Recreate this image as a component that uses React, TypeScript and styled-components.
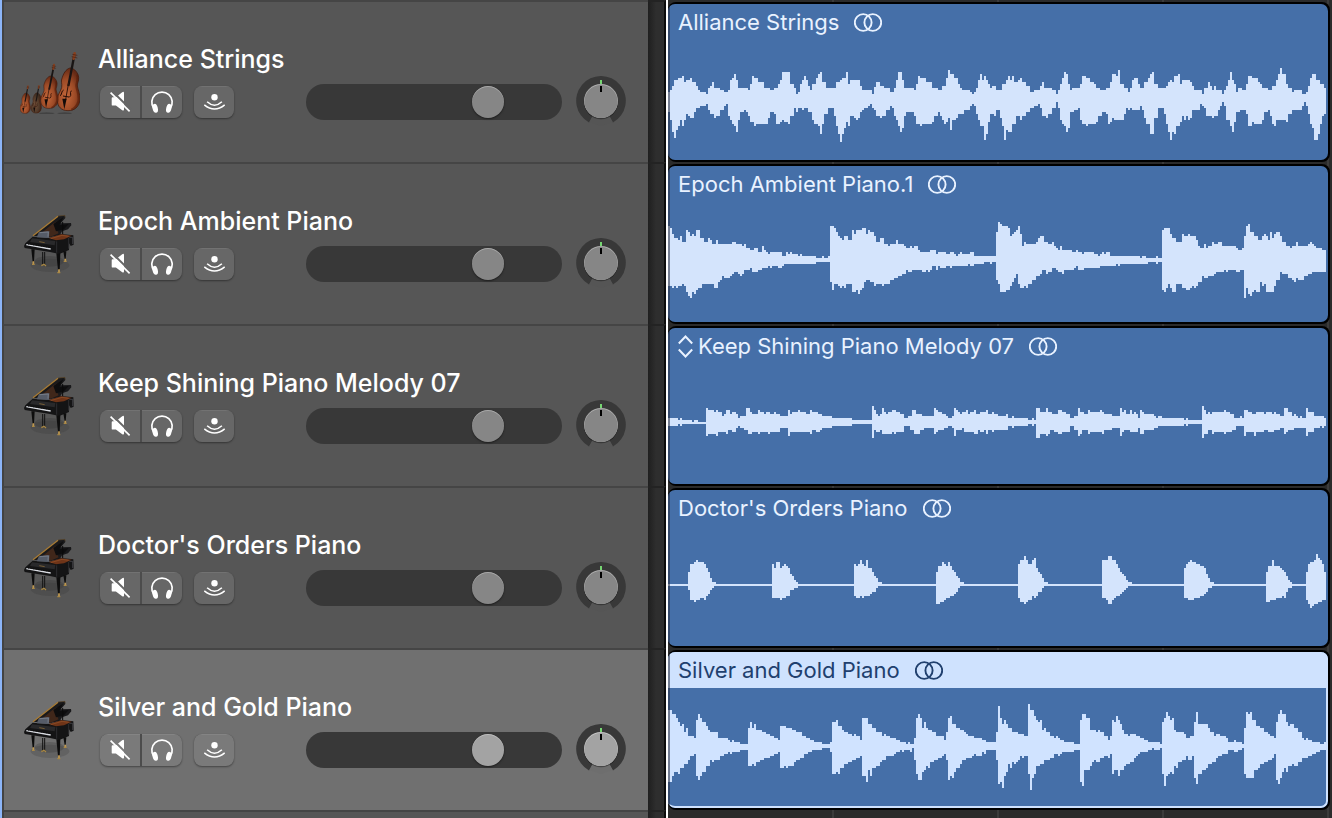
import React from "react";
import styled, { createGlobalStyle, css } from "styled-components";

const Global = createGlobalStyle`
  *, *::before, *::after { box-sizing: border-box; }
  html, body { margin: 0; padding: 0; background: #2a2a2a; }
  body { font-family: Inter, "Liberation Sans", sans-serif; overflow-x: hidden; }
  button { font: inherit; }
`;

/* ---------- layout ---------- */

const Workspace = styled.main`
  display: grid;
  grid-template-columns: 1fr 1fr;
  min-height: 100vh;
`;

const HeaderColumn = styled.section`
  display: flex;
  flex-direction: column;
  border-left: 2px solid #8cb5f8;
`;

const HeaderRow = styled.article`
  display: flex;
  min-height: 162px;
`;

const HeaderFiller = styled.div`
  display: flex;
  flex: 1;
`;

const HeaderBody = styled.div<{ $selected?: boolean }>`
  display: flex;
  flex: 1;
  min-width: 0;
  align-items: center;
  gap: 18px;
  padding: 0 22px 0 16px;
  border-top: 2px solid #454545;
  border-left: 2px solid #434343;
  background: ${(p) => (p.$selected ? "#707070" : "#565656")};
`;

const Gutter = styled.div`
  width: 18px;
  border-top: 2px solid #232323;
  border-right: 2px solid #0c0c0c;
  background: linear-gradient(90deg, #1f1f1f, #2e2e2e 8px, #2e2e2e);
`;

const TrackInfo = styled.div`
  flex: 1;
  min-width: 0;
  align-self: flex-start;
  padding-top: 40px;
`;

const TrackName = styled.h2`
  margin: 0;
  font-size: 25px;
  line-height: 34px;
  font-weight: 500;
  color: #fff;
  white-space: nowrap;
`;

const Controls = styled.div`
  display: flex;
  align-items: center;
  height: 52px;
  padding-left: 2px;
`;

/* ---------- track controls ---------- */

const ButtonGroup = styled.div`
  display: flex;
  gap: 2px;
  margin-right: 12px;
  border-radius: 8px;
  overflow: hidden;
  background: #4c4c4c;
  box-shadow: 0 1px 2px rgba(0, 0, 0, 0.4);
`;

const IconButton = styled.button<{ $lit?: boolean }>`
  display: flex;
  align-items: center;
  justify-content: center;
  width: 40px;
  height: 32px;
  padding: 0;
  border: 0;
  color: #fff;
  background: ${(p) => (p.$lit ? "#7a7a7a" : "#676767")};
  box-shadow: inset 0 1px 0 rgba(255, 255, 255, 0.08);
`;

const knob = css`
  width: 32px;
  height: 32px;
  border: 0;
  border-radius: 50%;
  box-shadow: inset 0 1px 0 rgba(255, 255, 255, 0.3), 0 1px 2px rgba(0, 0, 0, 0.5);
`;

const Fader = styled.input<{ $lit?: boolean }>`
  appearance: none;
  flex: 1;
  min-width: 80px;
  height: 36px;
  margin: 0 14px 0 60px;
  padding: 0 2px;
  border-radius: 18px;
  background: #383838;
  &::-webkit-slider-thumb {
    appearance: none;
    ${knob}
    background: ${(p) => (p.$lit ? "#a3a3a3" : "#868686")};
  }
  &::-moz-range-thumb {
    ${knob}
    background: ${(p) => (p.$lit ? "#a3a3a3" : "#868686")};
  }
`;

const PanBox = styled.label`
  position: relative;
  display: block;
  width: 50px;
  height: 52px;
`;

const PanInput = styled.input`
  position: absolute;
  inset: 0;
  width: 100%;
  height: 100%;
  margin: 0;
  opacity: 0;
`;

/* ---------- timeline ---------- */

const Timeline = styled.section`
  display: flex;
  flex-direction: column;
  gap: 2px;
  padding: 2px 2px 0 0;
  border-left: 2px solid #fff;
  background:
    repeating-linear-gradient(90deg, transparent 0 163px, #3b3b3b 163px 165px) 1px 0,
    linear-gradient(#2b2b2b, #2b2b2b);
`;

const ClipFrame = styled.article`
  height: 160px;
  padding: 2px 2px 2px 0;
  border-radius: 8px;
  background: #000;
`;

const ClipBody = styled.div<{ $selected?: boolean }>`
  position: relative;
  height: 156px;
  overflow: hidden;
  border-radius: 7px;
  background: #456fa8;
  color: #e9f2ff;
  &::before {
    content: "";
    position: absolute;
    z-index: 1;
    inset: 0 auto 0 0;
    width: 2px;
    background: rgba(40, 44, 60, 0.55);
  }
  ${(p) =>
    p.$selected &&
    css`
      color: #21406e;
      &::after {
        content: "";
        position: absolute;
        inset: 0;
        border: solid #cfe2fe;
        border-width: 0 2px 2px 0;
        border-radius: 7px;
      }
    `}
`;

const ClipTitle = styled.header<{ $selected?: boolean }>`
  position: relative;
  display: flex;
  align-items: center;
  height: 36px;
  padding: 0 10px;
  font-size: 22px;
  line-height: 28px;
  white-space: nowrap;
  background: ${(p) => (p.$selected ? "#cfe2fe" : "transparent")};
`;

const ClipName = styled.span`
  margin-right: 15px;
`;

const Waveform = styled.svg`
  position: absolute;
  inset: 0;
  width: 100%;
  height: 100%;
`;

/* ---------- icons ---------- */

const MuteIcon = ({ bg }: { bg: string }) => (
  <svg width="24" height="22" viewBox="-2 0 24 22" aria-hidden="true">
    <path d="M1.700 7.200q0-.9.9-.9h3.300L12.200 1.200q1.800-1.100 1.800.7v16.600q0 1.800-1.800.7L5.900 14.600H2.600q-.9 0-.9-.9z" fill="currentColor" />
    <path d="M2.600.6 21 18.800" stroke={bg} strokeWidth="2" />
    <path d="M.6 1.600 19.600 20.400" stroke="currentColor" strokeWidth="1.700" />
  </svg>
);

const HeadphonesIcon = () => (
  <svg width="24" height="24" viewBox="-1 -1 24 24" aria-hidden="true">
    <path d="M2.700 17.200A10.200 10.200 0 1 1 19.300 17.200" fill="none" stroke="currentColor" strokeWidth="1.700" />
    <ellipse cx="4.200" cy="17.300" rx="2.600" ry="4.500" transform="rotate(-14 4.200 17.300)" fill="currentColor" />
    <ellipse cx="17.800" cy="17.300" rx="2.600" ry="4.500" transform="rotate(14 17.800 17.300)" fill="currentColor" />
  </svg>
);

const MonitorIcon = () => (
  <svg width="24" height="18" viewBox="-1.500 0 24 18" aria-hidden="true">
    <circle cx="11" cy="4.300" r="3.200" fill="currentColor" />
    <path d="M3.600 8.800Q11 15.600 18.400 8.800M.8 11.800Q11 20.200 21.200 11.800" fill="none" stroke="currentColor" strokeWidth="1.500" />
  </svg>
);

const LoopIcon = () => (
  <svg width="28" height="20" viewBox="1 -.5 28 20" fill="none" stroke="currentColor" strokeWidth="1.900" aria-hidden="true">
    <circle cx="10.200" cy="10" r="8.400" />
    <circle cx="19.800" cy="10" r="8.400" />
  </svg>
);

const ChevronsIcon = () => (
  <svg width="20" height="24" viewBox="0 0 20 24" fill="none" stroke="currentColor" strokeWidth="2" aria-hidden="true">
    <path d="M.8 9.500 7.500 2.500 14.200 9.500M.8 15.500 7.500 22.500 14.200 15.500" />
  </svg>
);

const PanDial = ({ lit }: { lit?: boolean }) => (
  <svg width="50" height="52" viewBox="0 0 50 52" aria-hidden="true">
    <path d="M13 46.500A24.800 24.800 0 1 1 37 46.500L32.500 38.500H17.500Z" fill="#383838" />
    <path d="M17.500 38.500 25 34 32.500 38.500 36.500 46 25 50 13.500 46Z" fill={lit ? "#6e6e6e" : "#555"} />
    <circle cx="25" cy="26" r="17.200" fill="rgba(0,0,0,.35)" />
    <circle cx="25" cy="25" r="17" fill={lit ? "#c4c4c4" : "#adadad"} />
    <circle cx="25" cy="25.500" r="16.600" fill={lit ? "#a3a3a3" : "#868686"} />
    <path d="M25 4V8" stroke="#76d672" strokeWidth="2" />
    <path d="M25 10V16" stroke="#000" strokeWidth="2" />
  </svg>
);

const Instrument = ({ transform, dark }: { transform: string; dark?: boolean }) => (
  <g transform={transform}>
    <path
      d="M40 0C52 2 62 14 64 28C65 40 59 46 60 54C62 66 68 76 68 94C66 118 50 128 32 128C12 128 0 116 0 96C0 78 11 70 13 58C15 46 9 40 15 28C20 12 30 0 40 0Z"
      fill={dark ? "url(#woodDark)" : "url(#wood)"}
      stroke="#3a1407"
      strokeWidth="2"
    />
    <path d="M60 20C63 40 55 46 57 56C60 72 66 80 63 100C58 116 50 122 42 125" fill="none" stroke="#571d09" strokeWidth="6" opacity=".6" />
    <path d="M33 54 51-38" stroke="#191514" strokeWidth="7" />
    <path d="M49-28 52-44" stroke="#86401f" strokeWidth="8" strokeLinecap="round" />
    <path d="M43-34 60-30M45-41 60-38" stroke="#4a1d0d" strokeWidth="2" />
    <path d="M34 44 24 100" stroke="#32140a" strokeWidth="3" />
    <path d="M15 92H28L21 124Z" fill="#120b09" />
    <path d="M19 66q-5 2-6 9t-5 8M42 68q-4 6-2 10t-4 10M17 84l18 3" stroke="#230b05" strokeWidth="3" fill="none" />
  </g>
);

const StringsPicture = () => (
  <svg width="60" height="64" viewBox="60 60 180 192" role="img" aria-label="String section">
    <defs>
      <radialGradient id="wood" cx=".4" cy=".65" r=".65">
        <stop offset="0" stopColor="#c4673a" />
        <stop offset=".6" stopColor="#9c4a26" />
        <stop offset="1" stopColor="#642a15" />
      </radialGradient>
      <radialGradient id="woodDark" cx=".4" cy=".6" r=".65">
        <stop offset="0" stopColor="#76533b" />
        <stop offset="1" stopColor="#35261c" />
      </radialGradient>
    </defs>
    <ellipse cx="140" cy="250" rx="24" ry="3" fill="#3b3b3b" opacity=".7" />
    <ellipse cx="194" cy="250" rx="22" ry="3" fill="#3b3b3b" opacity=".7" />
    <Instrument transform="translate(172 114)" />
    <Instrument transform="translate(122 138) scale(.77 .76)" />
    <Instrument dark transform="translate(93 188) scale(.46 .48)" />
    <Instrument transform="translate(60 189) scale(.46 .48)" />
  </svg>
);

const PianoPicture = () => (
  <svg width="60" height="64" viewBox="60 66 180 192" role="img" aria-label="Grand piano">
    <ellipse cx="150" cy="226" rx="58" ry="20" fill="#333" opacity=".22" />
    <ellipse cx="148" cy="214" rx="44" ry="16" fill="#2b2b2b" opacity=".25" />
    <path d="M99 137 174 78 195 76 196 84 182 100 213 99 214 106 204 118 186 124 180 134 150 142Z" fill="#19191b" />
    <path d="M118 134 160 100 176 92 166 112 176 130 152 140Z" fill="#40271a" />
    <path d="M160 102 190 82 178 106 206 102 192 118 168 124Z" fill="#0d0d0e" />
    <path d="M99 137 174 79" stroke="#a97c35" strokeWidth="4" />
    <path d="M174 78 195 76 195 82" stroke="#5f4a2c" strokeWidth="2" fill="none" />
    <path d="M188 96V134" stroke="#0a0a0a" strokeWidth="3" />
    <path d="M72 168 76 160 98 140 150 144 182 132 220 136 221 164 212 168 208 160 207 180 178 192 150 186 74 174Z" fill="#141415" />
    <path d="M146 144 184 133 215 137 192 148 168 151Z" fill="#6e3418" />
    <path d="M152 146 186 136 206 139" stroke="#96532a" strokeWidth="2" fill="none" />
    <path d="M117 126 148 123 147 144 110 142Z" fill="#565c68" />
    <path d="M120 128 145 126 144 140" stroke="#858c98" strokeWidth="2" fill="none" />
    <path d="M96 145 166 153 164 166 90 156Z" fill="#29292b" />
    <path d="M118 155 134 158" stroke="#9d793c" strokeWidth="2" />
    <path d="M79 164 152 177" stroke="#d9dce2" strokeWidth="4" />
    <path d="M84 162 154 173" stroke="#0b0b0b" strokeWidth="3" strokeDasharray="3 2" />
    <path d="M170 154V188M206 144V176" stroke="#3a3a3e" strokeWidth="2" />
    <path d="M208 142H218V162" stroke="#515158" strokeWidth="2" fill="none" />
    <path d="M94 178H104L102 216H98ZM169 190H181L179 240H174ZM190 184H199L197 208H194Z" fill="#0d0d0d" />
    <path d="M128 186V226M134 186V226" stroke="#121212" strokeWidth="3" />
    <path d="M100 214V225M177 238V249M196 206V214" stroke="#c29a50" strokeWidth="5" />
    <path d="M96 223H104M172 248H181M124 227 132 223 138 228M191 214H200" stroke="#a98845" strokeWidth="4" fill="none" />
  </svg>
);

/* ---------- audio envelopes ----------
   Each envelope is a list of "x:y" steps on a grid of 6-unit cells, in two
   segments that start at 0 and at 990. */

type Wave = { top: [string, string]; bottom: [string, string]; origin: number };
type Step = [number, number];

const GRID_LEFT = 24;
const GRID_RIGHT = 1998;

const parse = (segments: [string, string]): Step[] =>
  segments
    .flatMap((text, i) =>
      text
        .trim()
        .split(/\s+/)
        .filter(Boolean)
        .map((pair): Step => {
          const [x, y] = pair.split(":").map(Number);
          return [x + i * 990, y];
        }),
    )
    .sort((a, b) => a[0] - b[0]);

const outline = (top: Step[], bottom: Step[]) => {
  const forward = top.map(([x, y]) => `H${x}V${y}`).join("");
  const back = [...bottom]
    .reverse()
    .map(([x, y]) => `V${y}H${x}`)
    .join("");
  return `M${GRID_LEFT} ${top[0][1]}${forward}H${GRID_RIGHT}${back}H${GRID_LEFT}Z`;
};

const strings: Wave = {
  origin: 12,
  top: [
    `24:276 30:270 36:258 42:240 54:234 66:228 72:246 78:240 90:234 96:246 108:258 114:270 120:276 138:282 144:264 150:258 156:246 162:264 180:270 192:276 204:270 210:240 216:234 222:222 228:240 234:264 264:270 270:252 276:228 282:234 294:246 312:264 330:270 342:264 354:252 360:240 366:216 390:252 402:264 408:282 414:276 420:252 426:240 432:228 438:240 444:258 450:270 456:252 468:234 474:222 480:216 486:246 498:264 528:246 540:240 546:234 558:216 564:252 570:240 600:258 606:270 636:282 642:260 648:246 660:258 672:264 690:276 702:264 708:240 714:216 726:240 732:264 762:270 768:252 774:228 780:234 798:246 816:264 834:270 846:258 858:234 864:210 870:222 882:234 894:252 900:264 906:270 930:276 936:282 942:276 948:264 954:240 960:222 966:240 972:228 978:240 984:252`,
    `0:264 6:258 18:270 36:252 48:240 54:228 60:240 66:228 72:246 84:240 90:234 96:246 108:258 120:276 132:270 144:270 150:258 156:246 162:264 186:270 198:282 204:270 210:252 216:234 222:216 228:222 234:252 240:270 246:264 270:252 276:228 288:234 300:246 312:252 318:264 330:270 348:264 360:246 366:222 378:228 384:210 390:252 402:264 414:276 420:264 426:240 432:234 444:252 450:264 462:246 474:234 480:222 486:216 492:252 504:264 528:258 534:246 540:240 546:246 552:228 564:222 570:252 576:240 600:246 606:258 612:270 636:282 642:264 654:246 660:258 666:270 672:258 678:270 696:282 702:270 708:258 714:240 720:216 726:240 732:252 738:276 744:264 756:270 768:252 774:228 786:234 804:246 810:252 816:264 834:270 846:258 858:240 864:222 870:204 876:222 888:252 894:264 906:276 912:270 936:282 948:276 954:258 960:234 966:222 978:240 990:252 1002:264`,
  ],
  bottom: [
    `24:336 30:360 36:396 42:414 48:390 54:378 60:360 66:378 72:360 78:342 84:348 90:354 102:336 108:324 120:318 138:312 144:330 150:342 162:354 168:348 180:330 192:318 198:312 204:348 210:360 216:372 222:378 228:396 234:360 240:336 252:330 258:336 264:348 270:366 282:378 288:372 324:354 330:336 342:342 348:372 360:366 366:360 372:366 384:372 390:348 402:324 408:336 414:324 426:330 432:324 444:336 456:360 462:372 474:378 480:402 486:372 492:342 504:324 522:348 528:378 534:402 540:426 546:402 552:384 558:366 564:378 570:348 582:354 588:360 594:354 600:336 606:330 612:324 624:318 630:312 636:324 642:330 648:348 660:354 666:348 678:330 690:318 696:324 702:348 708:360 714:378 720:396 726:384 732:348 738:336 762:348 768:372 780:378 786:372 816:366 822:348 834:336 840:348 846:360 852:372 858:366 864:354 870:390 876:360 888:354 894:342 912:330 930:318 936:312 942:318 948:342 954:360 960:378 972:420 978:402 984:366 990:354`,
    `0:342 12:348 18:330 30:354 36:378 42:420 48:390 54:396 66:372 78:348 90:360 96:348 108:336 120:324 132:318 144:312 150:324 156:348 168:354 174:342 186:324 198:306 204:324 210:360 216:372 222:378 228:396 234:384 240:336 252:330 264:324 270:360 276:372 288:378 294:372 318:366 324:348 336:336 348:342 354:372 360:366 366:354 372:360 402:342 408:324 414:330 420:324 426:330 450:318 456:330 462:354 468:372 480:402 492:354 504:324 522:342 528:372 534:396 540:420 546:396 552:402 558:378 570:366 576:348 582:360 588:348 594:360 600:354 606:330 630:312 636:318 642:324 648:348 666:354 672:348 684:330 690:318 696:306 702:318 708:360 720:378 726:396 732:366 738:336 750:330 768:342 774:378 786:366 792:372 816:360 822:336 834:330 840:348 846:372 852:378 858:360 888:366 894:342 906:330 936:318 942:306 948:318 954:342 960:372 966:384 972:420 984:402 990:372 996:348 1002:342`,
  ],
};

const epoch: Wave = {
  origin: 3,
  top: [
    `24:183 30:189 36:207 42:219 54:225 60:213 66:231 78:195 84:201 90:213 96:207 102:213 108:195 120:219 132:231 144:219 150:225 156:237 168:225 174:237 216:231 228:237 246:243 252:237 258:249 270:255 282:249 294:261 306:243 312:255 318:261 324:267 330:261 366:273 378:261 384:267 390:261 396:267 414:273 420:267 426:273 432:273 468:279 486:273 492:279 504:273 510:183 522:189 528:201 534:213 540:219 546:225 552:213 564:225 576:195 582:207 588:195 606:189 618:207 624:195 630:201 642:213 648:231 660:219 672:237 684:243 690:237 708:225 714:237 732:243 738:249 750:243 756:249 762:243 774:255 780:261 810:255 828:267 834:261 858:267 870:261 882:267 888:273 894:267 900:261 906:267 930:261 942:273`,
    `0:273 18:201 24:171 30:177 36:183 54:189 60:213 66:207 72:201 78:195 84:183 90:207 96:243 102:231 108:237 138:231 144:219 150:213 162:231 174:237 186:231 192:243 198:249 204:255 210:243 216:255 246:261 258:255 264:261 276:267 282:261 312:267 324:273 330:267 336:261 342:267 348:261 360:273 450:279 456:273 468:279 498:273 504:279 516:195 522:189 540:207 546:219 558:231 576:207 582:213 594:207 600:213 618:225 624:243 630:249 642:237 648:249 654:243 666:231 672:237 684:231 696:243 738:249 744:255 756:249 762:213 768:183 774:177 780:201 792:213 804:225 816:213 822:207 828:213 834:225 840:201 846:219 852:207 858:201 870:213 876:231 888:243 900:249 906:243 918:231 924:243 954:237 960:231 966:237 972:243 978:249 996:255`,
  ],
  bottom: [
    `24:363 36:369 42:363 48:369 54:363 66:357 72:363 78:381 84:393 90:399 96:381 102:387 108:375 114:369 126:357 162:369 174:351 180:345 186:333 192:339 210:333 216:327 222:321 234:327 240:333 246:327 252:315 270:309 276:321 294:315 306:309 324:303 330:309 336:303 354:309 366:303 372:297 468:291 510:351 516:375 522:357 534:363 540:369 546:363 552:369 558:357 576:381 588:375 594:387 600:375 606:369 612:351 618:345 630:351 642:363 648:357 666:363 672:357 690:345 702:339 714:333 726:327 738:315 744:321 756:315 786:321 798:315 804:321 810:315 816:303 828:315 834:303 840:309 858:303 870:309 876:303 924:297 930:303 942:297 972:291`,
    `0:297 6:291 18:345 24:357 30:381 48:375 60:363 66:351 72:339 78:327 84:357 90:369 102:363 108:369 114:357 126:345 138:333 150:327 156:315 168:327 174:321 186:309 198:315 204:321 216:327 222:315 252:309 258:303 264:315 282:309 318:309 330:303 378:297 384:303 390:297 474:291 498:297 504:291 516:375 522:381 528:369 534:357 540:369 546:381 558:357 576:369 588:375 600:369 606:363 612:369 618:363 624:351 636:333 642:339 654:333 672:327 678:321 702:315 708:321 714:315 738:321 750:315 762:399 768:369 774:387 780:393 786:381 792:375 798:381 810:351 816:363 822:357 828:381 852:363 858:345 870:321 876:327 894:339 906:345 912:351 918:339 924:345 942:333 954:327 966:321`,
  ],
};

const shining: Wave = {
  origin: 9,
  top: [
    `24:279 54:285 60:279 66:285 96:291 102:285 114:291 138:249 144:255 162:261 168:255 174:261 186:273 192:267 198:255 210:267 216:261 228:267 234:279 240:273 258:249 270:261 276:267 294:255 300:261 312:267 318:261 330:267 342:261 348:267 360:273 384:255 390:267 396:261 414:255 420:261 438:267 450:255 456:261 474:267 486:273 516:279 576:285 636:243 642:255 648:267 654:273 660:267 666:249 672:261 678:267 684:261 696:255 708:261 720:267 732:279 744:273 756:255 768:267 786:273 822:249 828:255 834:261 846:267 858:273 864:279 876:273 882:249 888:255 894:261 900:267 906:261 918:255 924:267 930:261 942:255 948:267 960:261 978:255 984:267 996:261`,
    `12:267 24:273 48:267 54:279 66:273 72:279 114:285 126:279 132:285 138:249 150:261 168:249 174:261 186:267 204:255 216:261 228:267 240:279 252:273 264:249 270:261 282:267 294:255 300:261 330:255 336:261 342:267 366:273 390:249 396:261 402:255 408:267 420:255 426:267 432:261 438:267 444:279 450:255 456:261 462:267 492:273 498:279 504:273 516:279 582:285 588:279 594:285 636:243 642:255 648:267 654:261 660:267 666:261 702:255 708:261 720:267 732:279 750:273 756:279 762:255 774:261 786:267 798:261 822:267 828:261 846:267 852:261 858:267 870:273 882:249 894:261 906:273 912:267 918:273 924:279 930:273 936:279 948:249 954:261 972:273 996:273 1002:279`,
  ],
  bottom: [
    `24:303 54:297 60:303 66:297 138:333 144:327 168:333 174:321 198:327 204:315 216:321 228:309 234:303 240:309 252:315 264:327 276:321 294:327 300:321 324:327 330:321 360:309 384:333 390:321 450:327 456:315 468:321 480:315 486:309 516:303 576:297 636:339 642:315 648:321 660:315 666:327 696:321 702:327 708:321 732:303 750:315 762:327 780:315 792:309 822:327 828:321 834:315 852:309 864:303 876:309 882:333 888:315 906:309 912:321 942:327 954:315 960:321 972:315 978:327 984:315`,
    `0:315 6:321 12:315 48:315 54:303 66:309 72:303 114:297 126:303 132:297 138:339 150:327 168:333 174:327 180:315 192:321 204:327 216:321 240:303 252:315 264:333 270:327 276:315 294:327 300:321 336:327 342:315 366:309 390:333 396:321 402:315 420:321 444:309 450:327 462:315 492:309 504:303 582:297 588:303 594:297 636:339 642:327 654:315 666:327 672:321 702:327 708:321 726:315 738:303 762:333 768:321 792:333 798:321 822:315 834:321 852:315 870:309 882:327 888:321 894:315 912:309 948:333 954:321 972:309 990:303 996:309 1002:303`,
  ],
};

/* Short chords on a thin baseline: one entry per chord, one number per cell. */
const chords: { at: number; top: number[]; bottom: number[] }[] = [
  { at: 84, top: [261, 237, 237, 231, 225, 231, 231, 231, 237, 249, 261, 279, 291, 291, 297], bottom: [315, 345, 345, 351, 345, 345, 339, 339, 345, 333, 327, 315, 309, 303, 303] },
  { at: 336, top: [237, 249, 231, 231, 249, 243, 237, 243, 249, 267, 273, 285, 291, 297], bottom: [339, 339, 339, 339, 345, 339, 339, 333, 333, 315, 315, 309, 309, 303] },
  { at: 582, top: [237, 243, 237, 225, 237, 243, 225, 249, 249, 261, 273, 279, 291, 291], bottom: [333, 339, 339, 333, 339, 333, 333, 333, 327, 321, 321, 309, 303, 303] },
  { at: 828, top: [261, 243, 243, 231, 237, 243, 231, 243, 255, 261, 273, 279, 291, 291], bottom: [357, 357, 351, 351, 345, 339, 339, 333, 333, 327, 321, 309, 303, 303] },
  { at: 1074, top: [237, 225, 225, 213, 225, 237, 237, 225, 219, 249, 261, 267, 279, 291, 291], bottom: [339, 351, 351, 357, 351, 345, 345, 333, 339, 333, 321, 321, 309, 303, 303] },
  { at: 1326, top: [225, 225, 225, 213, 213, 225, 225, 237, 249, 261, 267, 273, 285, 291, 291], bottom: [339, 339, 345, 357, 357, 345, 339, 333, 333, 327, 321, 315, 309, 303, 303] },
  { at: 1572, top: [249, 237, 231, 225, 231, 231, 237, 237, 243, 243, 249, 267, 279, 291, 291], bottom: [339, 339, 345, 345, 345, 339, 339, 339, 333, 333, 327, 321, 309, 309, 303] },
  { at: 1818, top: [261, 243, 243, 225, 243, 243, 243, 249, 255, 261, 273, 285, 291], bottom: [351, 351, 345, 345, 345, 339, 339, 339, 333, 339, 321, 309, 309] },
  { at: 1938, top: [261, 237, 231, 231, 225, 207, 219, 225, 237, 261], bottom: [345, 357, 369, 363, 357, 357, 351, 351, 345, 345] },
];

const chordSteps = (side: "top" | "bottom", rest: number): string =>
  [`24:${rest}`]
    .concat(
      chords.flatMap((c) => [
        ...c[side].map((y, i) => `${c.at + i * 6}:${y}`),
        `${c.at + c[side].length * 6}:${rest}`,
      ]),
    )
    .join(" ");

const doctor: Wave = {
  origin: 15,
  top: [chordSteps("top", 297), ""],
  bottom: [chordSteps("bottom", 303), ""],
};

const silver: Wave = {
  origin: 21,
  top: [
    `24:195 36:207 48:219 54:231 60:243 66:237 72:261 78:249 84:273 102:279 108:225 114:207 120:219 126:231 138:243 144:255 150:261 174:279 204:285 210:291 216:285 222:291 240:297 264:249 270:231 276:249 282:237 288:255 306:261 318:267 330:273 342:279 354:285 360:243 378:249 396:255 408:261 426:273 438:279 450:285 462:291 486:297 510:291 516:231 528:225 534:243 546:255 552:261 564:267 576:273 582:267 588:273 600:285 606:219 624:237 636:249 648:261 666:273 672:267 678:273 690:279 708:285 720:291 738:297 744:291 750:297 762:279 768:219 774:207 780:219 786:249 792:231 798:249 804:255 816:261 828:273 852:285 858:261 864:219 870:213 876:237 888:249 900:255 912:261 918:267 924:273 942:279 966:285 978:291`,
    `0:291 18:261 24:183 30:219 36:237 42:225 48:237 54:249 66:261 84:267 102:273 114:177 120:195 132:213 138:225 144:231 150:225 156:255 162:249 168:261 180:273 192:279 198:273 204:279 210:285 222:291 252:297 270:225 276:207 288:219 300:255 318:261 324:255 330:261 342:273 354:285 360:273 366:225 372:231 378:213 384:225 390:237 396:255 402:267 414:273 420:267 426:267 438:273 450:279 462:285 474:291 510:297 516:231 522:219 528:201 534:213 540:225 546:219 552:255 558:261 582:267 588:279 600:273 612:231 618:201 624:237 654:249 660:261 672:273 678:267 690:273 708:279 714:291 732:285 738:291 756:297 762:249 768:201 774:207 780:201 786:225 798:243 810:249 822:261 834:267 840:273 852:279 858:231 864:207 870:195 876:207 888:231 894:243 900:237 912:249 924:261 936:279 942:285 948:279 954:285 966:291 990:297 1002:291`,
  ],
  bottom: [
    `24:411 36:393 42:381 54:387 60:369 72:357 84:345 90:333 102:327 108:393 114:405 120:393 126:381 138:363 150:345 156:351 162:345 180:333 192:327 204:321 210:327 216:321 240:315 264:363 276:357 282:363 288:351 300:345 312:339 330:333 342:327 354:321 360:369 372:363 378:369 384:363 402:351 408:345 420:339 432:327 444:321 456:315 486:309 510:321 516:387 528:381 534:387 540:369 552:357 564:351 576:345 588:339 600:333 606:393 618:411 624:375 630:393 636:369 648:363 660:351 666:345 678:333 702:327 708:321 720:315 726:321 732:315 750:321 756:309 762:345 768:387 774:405 786:381 792:375 798:363 804:369 810:351 822:345 834:339 846:333 852:327 858:345 864:405 870:393 876:399 882:381 888:369 900:357 906:345 918:339 936:333 942:327 948:333 966:321 972:327 978:315`,
    `0:315 18:345 24:417 30:411 36:429 42:393 48:381 54:357 60:369 66:351 72:357 78:351 84:345 90:333 96:339 102:333 114:387 120:435 126:399 132:387 138:363 150:357 162:345 180:339 192:327 204:333 210:327 216:321 252:315 270:411 276:423 282:375 300:363 306:351 312:345 318:351 330:339 342:333 354:339 360:327 366:387 372:375 384:393 390:375 402:363 408:357 420:351 432:339 438:333 444:327 450:321 474:315 486:309 492:315 510:309 516:387 522:423 528:393 534:387 540:381 546:387 552:363 558:369 564:351 576:345 588:333 594:345 606:333 612:399 618:417 624:387 636:375 648:369 654:357 666:351 678:339 684:333 696:327 708:327 714:315 732:321 744:315 756:309 762:387 768:399 792:375 804:369 810:357 822:351 834:345 846:339 852:327 858:405 864:417 870:399 876:381 882:369 888:381 894:363 906:357 912:363 924:351 936:339 954:333 966:327 978:321 990:315`,
  ],
};

/* ---------- page ---------- */

type Track = {
  name: string;
  clip: string;
  wave: Wave;
  strings?: boolean;
  alternates?: boolean;
  selected?: boolean;
};

const tracks: Track[] = [
  { name: "Alliance Strings", clip: "Alliance Strings", wave: strings, strings: true },
  { name: "Epoch Ambient Piano", clip: "Epoch Ambient Piano.1", wave: epoch },
  { name: "Keep Shining Piano Melody 07", clip: "Keep Shining Piano Melody 07", wave: shining, alternates: true },
  { name: "Doctor's Orders Piano", clip: "Doctor's Orders Piano", wave: doctor },
  { name: "Silver and Gold Piano", clip: "Silver and Gold Piano", wave: silver, selected: true },
];

const TrackHeader = ({ track }: { track: Track }) => (
  <HeaderRow>
    <HeaderBody $selected={track.selected}>
      {track.strings ? <StringsPicture /> : <PianoPicture />}
      <TrackInfo>
        <TrackName>{track.name}</TrackName>
        <Controls>
          <ButtonGroup>
            <IconButton $lit={track.selected} type="button" aria-label={`Mute ${track.name}`}>
              <MuteIcon bg={track.selected ? "#7a7a7a" : "#676767"} />
            </IconButton>
            <IconButton $lit={track.selected} type="button" aria-label={`Solo ${track.name}`}>
              <HeadphonesIcon />
            </IconButton>
          </ButtonGroup>
          <ButtonGroup>
            <IconButton $lit={track.selected} type="button" aria-label={`Monitor ${track.name}`}>
              <MonitorIcon />
            </IconButton>
          </ButtonGroup>
          <Fader
            $lit={track.selected}
            type="range"
            min={0}
            max={220}
            defaultValue={164}
            aria-label={`Volume ${track.name}`}
          />
          <PanBox>
            <PanDial lit={track.selected} />
            <PanInput type="range" min={-64} max={63} defaultValue={0} aria-label={`Pan ${track.name}`} />
          </PanBox>
        </Controls>
      </TrackInfo>
    </HeaderBody>
    <Gutter />
  </HeaderRow>
);

const Clip = ({ track }: { track: Track }) => (
  <ClipFrame>
    <ClipBody $selected={track.selected}>
      <Waveform viewBox={`24 ${track.wave.origin} 1980 468`} preserveAspectRatio="none" aria-hidden="true">
        <path
          d={outline(parse(track.wave.top), parse(track.wave.bottom))}
          fill={track.selected ? "#d0e3ff" : "#d4e4fc"}
          shapeRendering="crispEdges"
        />
      </Waveform>
      <ClipTitle $selected={track.selected}>
        {track.alternates && <ChevronsIcon />}
        <ClipName>{track.clip}</ClipName>
        <LoopIcon />
      </ClipTitle>
    </ClipBody>
  </ClipFrame>
);

export default function App() {
  return (
    <>
      <Global />
      <Workspace>
        <HeaderColumn aria-label="Tracks">
          {tracks.map((t) => (
            <TrackHeader key={t.name} track={t} />
          ))}
          <HeaderFiller>
            <HeaderBody />
            <Gutter />
          </HeaderFiller>
        </HeaderColumn>
        <Timeline aria-label="Timeline">
          {tracks.map((t) => (
            <Clip key={t.name} track={t} />
          ))}
        </Timeline>
      </Workspace>
    </>
  );
}
